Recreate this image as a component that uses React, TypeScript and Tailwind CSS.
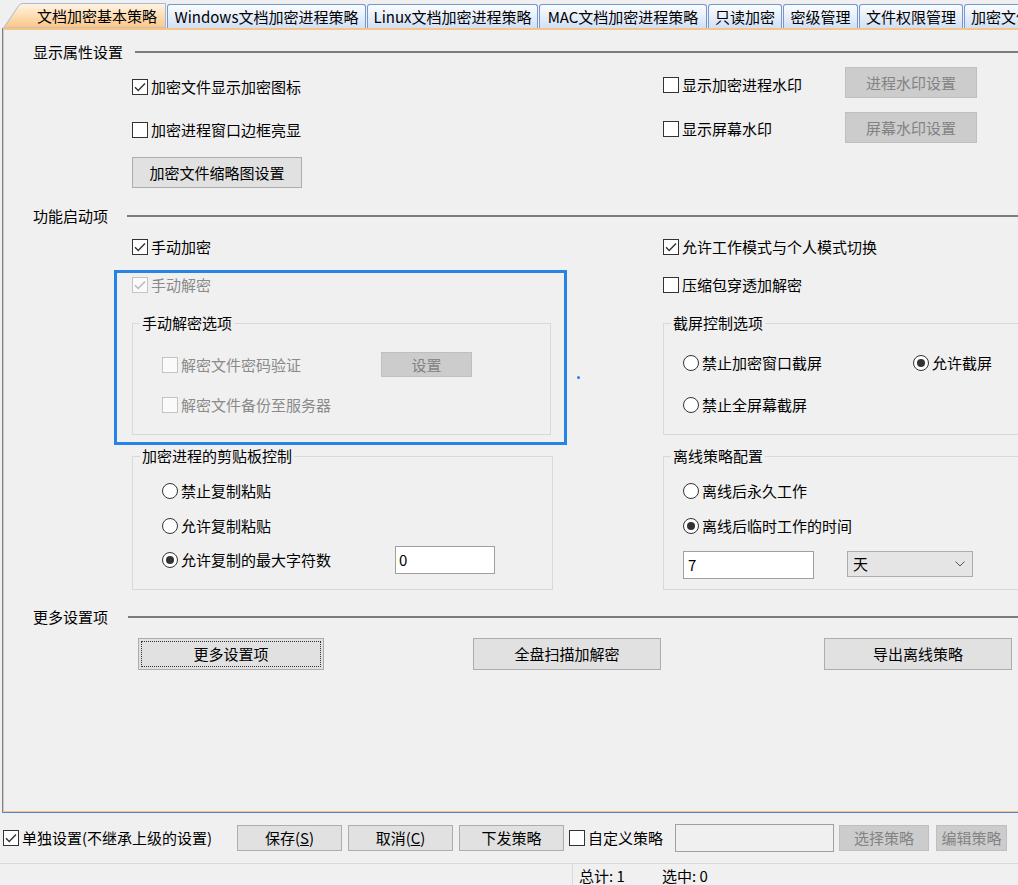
import React from 'react';

function Check({ checked = false, disabled = false }: { checked?: boolean; disabled?: boolean }) {
  return (
    <span
      className={
        disabled
          ? 'flex h-[16px] w-[16px] shrink-0 items-center justify-center border border-[#c4c4c4] bg-[#fafafa]'
          : 'flex h-[16px] w-[16px] shrink-0 items-center justify-center border border-[#333333] bg-white'
      }
    >
      {checked && (
        <svg width="14" height="14" viewBox="0 0 14 14">
          <path d="M2 7.2 L5.2 10.4 L12 3.4" fill="none" stroke={disabled ? '#b8b8b8' : '#333333'} strokeWidth="1.4" />
        </svg>
      )}
    </span>
  );
}

function Radio({ checked = false }: { checked?: boolean }) {
  return (
    <span className="flex h-[16px] w-[16px] shrink-0 items-center justify-center rounded-full border border-[#333333] bg-white">
      {checked && <span className="h-[8px] w-[8px] rounded-full bg-[#333333]" />}
    </span>
  );
}

function CheckRow({
  label,
  checked,
  disabled,
  className = '',
}: {
  label: React.ReactNode;
  checked?: boolean;
  disabled?: boolean;
  className?: string;
}) {
  return (
    <div className={'flex h-[20px] shrink-0 items-center ' + className}>
      <Check checked={checked} disabled={disabled} />
      <span className={disabled ? 'ml-[3px] whitespace-nowrap text-[#8a8a8a]' : 'ml-[3px] whitespace-nowrap'}>{label}</span>
    </div>
  );
}

function RadioRow({ label, checked, className = '' }: { label: string; checked?: boolean; className?: string }) {
  return (
    <div className={'flex h-[20px] shrink-0 items-center ' + className}>
      <Radio checked={checked} />
      <span className="ml-[3px] whitespace-nowrap">{label}</span>
    </div>
  );
}

function Btn({
  children,
  className = '',
  disabled = false,
}: {
  children: React.ReactNode;
  className?: string;
  disabled?: boolean;
}) {
  return (
    <div
      className={
        (disabled
          ? 'flex shrink-0 items-center justify-center border border-[#bfbfbf] bg-[#cccccc] text-[#838383] '
          : 'flex shrink-0 items-center justify-center border border-[#adadad] bg-[#e1e1e1] ') + className
      }
    >
      <span className="whitespace-nowrap">{children}</span>
    </div>
  );
}

function Header({ title, labelW }: { title: string; labelW: string }) {
  return (
    <div className="flex h-[20px] shrink-0 items-center pl-[29px]">
      <span className={'whitespace-nowrap ' + labelW}>{title}</span>
      <span className="h-[2px] flex-1 bg-[#7c7c7c]" />
    </div>
  );
}

function Group({ title, className = '', children }: { title: string; className?: string; children?: React.ReactNode }) {
  return (
    <div className={'relative shrink-0 border border-[#d9d9d9] ' + className}>
      <span className="absolute left-[7px] top-[-11px] whitespace-nowrap bg-[#f0f0f0] pl-[2px] pr-[2px] leading-[20px]">
        {title}
      </span>
      {children}
    </div>
  );
}

function Tab({ children, className = '' }: { children: React.ReactNode; className?: string }) {
  return (
    <div
      className={
        'ml-[1px] flex h-[24px] shrink-0 items-center justify-center rounded-t-[3px] border border-b-0 border-[#7596cf] bg-linear-to-b from-[#fbfdff] to-[#d2e0f5] ' +
        className
      }
    >
      <span className="whitespace-nowrap">{children}</span>
    </div>
  );
}

export default function App() {
  return (
    <div className="h-[885px] w-[1018px] overflow-hidden bg-[#f0f0f0] font-['Noto_Sans_CJK_SC',sans-serif] text-[15px] leading-[20px] text-black">
      {/* Tab strip */}
      <div className="flex h-[28px] items-end overflow-hidden pl-[3px]">
        <div className="relative h-[25px] w-[163px] shrink-0">
          <svg className="absolute left-0 top-0" width="163" height="25" viewBox="0 0 163 25">
            <defs>
              <linearGradient id="activeTab" x1="0" y1="0" x2="0" y2="1">
                <stop offset="0" stopColor="#fff4e4" />
                <stop offset="0.45" stopColor="#fde0b8" />
                <stop offset="1" stopColor="#fbc687" />
              </linearGradient>
            </defs>
            <path
              d="M0.5 25 L15.5 3 Q17 0.5 20 0.5 L162.5 0.5 L162.5 25 Z"
              fill="url(#activeTab)"
              stroke="#a7b9d8"
              strokeWidth="1"
            />
          </svg>
          <span className="relative flex h-full items-center whitespace-nowrap pl-[34px]">文档加密基本策略</span>
        </div>
        <Tab className="w-[199px]">Windows文档加密进程策略</Tab>
        <Tab className="w-[171px]">Linux文档加密进程策略</Tab>
        <Tab className="w-[168px]">MAC文档加密进程策略</Tab>
        <Tab className="w-[74px]">只读加密</Tab>
        <Tab className="w-[75px]">密级管理</Tab>
        <Tab className="w-[104px]">文件权限管理</Tab>
        <Tab className="w-[104px] justify-start pl-[6px]">加密文件类型</Tab>
      </div>

      {/* Panel */}
      <div className="ml-[2px] h-[785px] border-b border-l border-[#5b84c4]">
        <div className="flex h-full flex-col border-b border-l border-t-2 border-[#f5c48a]">
          {/* 显示属性设置 */}
          <div className="mt-[12px]">
            <Header title="显示属性设置" labelW="w-[102px]" />
          </div>
          <div className="mt-[5px] flex">
            <div className="ml-[128px] flex w-[531px] shrink-0 flex-col items-start">
              <CheckRow className="mt-[10px]" checked label="加密文件显示加密图标" />
              <CheckRow className="mt-[23px]" label="加密进程窗口边框亮显" />
              <Btn className="mt-[17px] h-[31px] w-[170px]">加密文件缩略图设置</Btn>
            </div>
            <div className="flex flex-col">
              <div className="flex items-start">
                <CheckRow className="mt-[8px] w-[182px]" label="显示加密进程水印" />
                <Btn disabled className="h-[31px] w-[132px]">
                  进程水印设置
                </Btn>
              </div>
              <div className="mt-[14px] flex items-start">
                <CheckRow className="mt-[7px] w-[182px]" label="显示屏幕水印" />
                <Btn disabled className="h-[31px] w-[132px]">
                  屏幕水印设置
                </Btn>
              </div>
            </div>
          </div>

          {/* 功能启动项 */}
          <div className="mt-[18px]">
            <Header title="功能启动项" labelW="w-[94px]" />
          </div>
          <div className="mt-[11px] flex">
            {/* left column */}
            <div className="ml-[110px] flex w-[453px] shrink-0 flex-col items-start">
              <CheckRow className="ml-[18px]" checked label="手动加密" />
              <div className="mt-[13px] flex h-[175px] w-[453px] shrink-0 flex-col items-start border-[3px] border-[#2683e8]">
                <CheckRow className="ml-[15px] mt-[2px]" checked disabled label="手动解密" />
                <Group title="手动解密选项" className="ml-[15px] mt-[28px] h-[112px] w-[419px] pl-[29px] pt-[28px]">
                  <div className="flex h-[25px] items-center">
                    <div className="w-[219px]">
                      <CheckRow disabled label="解密文件密码验证" />
                    </div>
                    <Btn disabled className="h-[25px] w-[91px]">
                      设置
                    </Btn>
                  </div>
                  <CheckRow className="mt-[18px]" disabled label="解密文件备份至服务器" />
                </Group>
              </div>
              <Group title="加密进程的剪贴板控制" className="ml-[18px] mt-[11px] h-[134px] w-[421px] pl-[29px] pt-[24px]">
                <RadioRow label="禁止复制粘贴" />
                <RadioRow className="mt-[15px]" label="允许复制粘贴" />
                <div className="mt-[10px] flex h-[28px] items-center">
                  <div className="w-[233px]">
                    <RadioRow checked label="允许复制的最大字符数" />
                  </div>
                  <div className="flex h-[28px] w-[100px] items-center border border-[#a0a0a0] bg-white pl-[3px]">0</div>
                </div>
              </Group>
            </div>
            {/* spacer with dot */}
            <div className="w-[96px] shrink-0">
              <div className="ml-[10px] mt-[139px] h-[3px] w-[3px] rounded-full bg-[#2683e8]" />
            </div>
            {/* right column */}
            <div className="flex w-[370px] shrink-0 flex-col items-start">
              <CheckRow checked label="允许工作模式与个人模式切换" />
              <CheckRow className="mt-[18px]" label="压缩包穿透加解密" />
              <Group title="截屏控制选项" className="mt-[28px] h-[112px] w-[370px] pl-[19px] pt-[29px]">
                <div className="flex">
                  <div className="w-[230px]">
                    <RadioRow label="禁止加密窗口截屏" />
                  </div>
                  <RadioRow checked label="允许截屏" />
                </div>
                <RadioRow className="mt-[22px]" label="禁止全屏幕截屏" />
              </Group>
              <Group title="离线策略配置" className="mt-[21px] h-[134px] w-[370px] pl-[19px] pt-[24px]">
                <RadioRow label="离线后永久工作" />
                <RadioRow className="mt-[15px]" checked label="离线后临时工作的时间" />
                <div className="mt-[15px] flex items-start">
                  <div className="flex h-[28px] w-[131px] items-center border border-[#a0a0a0] bg-white pl-[4px]">7</div>
                  <div className="ml-[33px] flex h-[26px] w-[126px] items-center justify-between border border-[#adadad] bg-[#e5e5e5] pl-[5px] pr-[7px]">
                    <span>天</span>
                    <svg width="10" height="6" viewBox="0 0 10 6">
                      <path d="M0.5 0.5 L5 5 L9.5 0.5" fill="none" stroke="#555555" strokeWidth="1" />
                    </svg>
                  </div>
                </div>
              </Group>
            </div>
          </div>

          {/* 更多设置项 */}
          <div className="mt-[17px]">
            <Header title="更多设置项" labelW="w-[95px]" />
          </div>
          <div className="mt-[11px] flex pl-[134px]">
            <Btn className="h-[32px] w-[186px] border-[#0078d7] outline-1 outline-offset-[-4px] outline-[#333333] outline-dotted">
              更多设置项
            </Btn>
            <Btn className="ml-[149px] h-[32px] w-[188px]">全盘扫描加解密</Btn>
            <Btn className="ml-[163px] h-[32px] w-[188px]">导出离线策略</Btn>
          </div>
        </div>
      </div>

      {/* Bottom bar */}
      <div className="flex h-[50px] items-center pl-[3px]">
        <CheckRow className="w-[234px]" checked label="单独设置(不继承上级的设置)" />
        <Btn className="h-[26px] w-[105px]">
          保存(<span className="underline">S</span>)
        </Btn>
        <Btn className="ml-[6px] h-[26px] w-[105px]">
          取消(<span className="underline">C</span>)
        </Btn>
        <Btn className="ml-[6px] h-[26px] w-[105px]">下发策略</Btn>
        <CheckRow className="ml-[5px] w-[106px]" label="自定义策略" />
        <div className="h-[28px] w-[159px] border border-[#a0a0a0] bg-[#f0f0f0]" />
        <Btn disabled className="ml-[5px] h-[26px] w-[90px]">
          选择策略
        </Btn>
        <Btn disabled className="ml-[7px] h-[26px] w-[71px]">
          编辑策略
        </Btn>
      </div>

      {/* Status bar */}
      <div className="flex h-[22px] border-t border-[#d9d9d9]">
        <div className="ml-[572px] flex h-full items-center border-l border-[#d9d9d9] pl-[6px] pt-[2px]">
          <span className="w-[83px] whitespace-nowrap">总计: 1</span>
          <span className="whitespace-nowrap">选中: 0</span>
        </div>
      </div>
    </div>
  );
}
